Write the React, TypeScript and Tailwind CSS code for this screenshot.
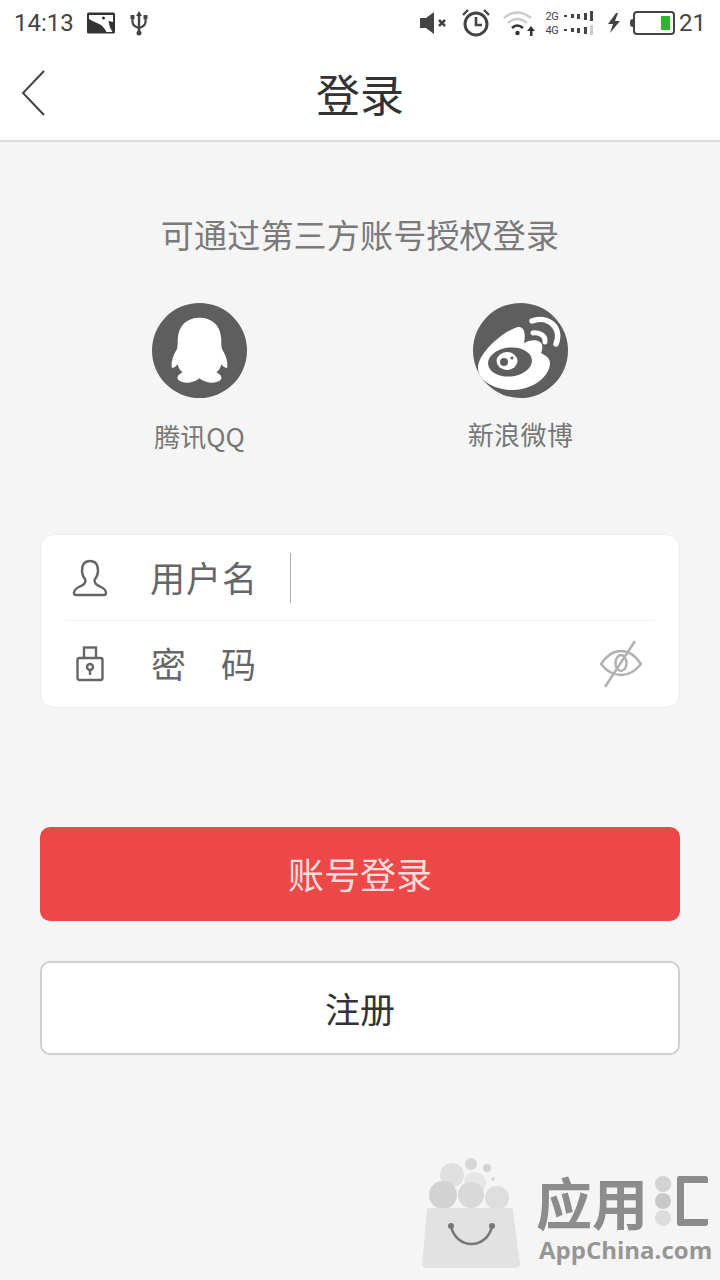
import React from "react";

const cjk = { fontFamily: '"Noto Sans CJK SC", sans-serif' };

function StatusLeft() {
  return (
    <div className="flex items-center">
      <span className="w-[59px] text-[24px] leading-none text-[#444] [font-family:Roboto,sans-serif]">14:13</span>
      <svg className="ml-[14px]" width="28" height="22" viewBox="0 0 28 22">
        <rect x="0" y="0.5" width="28" height="21" rx="1.5" fill="#333" />
        <path d="M2 3 H26 V10 L21.5 9 Q22 15 25.5 20 H19.5 Q16 13 10 11 Q5 9 2 7 Z" fill="#fff" />
        <circle cx="16.5" cy="6" r="1.5" fill="#333" />
      </svg>
      <svg className="ml-[14px]" width="20" height="26" viewBox="0 0 20 26">
        <path d="M10 1 L13 6 H11.2 V22 H8.8 V6 H7 Z" fill="#444" />
        <path d="M3.5 8 V12 Q3.5 16 10 18 Q16.5 16 16.5 12 V8" fill="none" stroke="#444" strokeWidth="2.2" />
        <rect x="1.5" y="5" width="4" height="4" fill="#444" />
        <rect x="14.5" y="5" width="4" height="4" fill="#444" />
        <circle cx="10" cy="23" r="2.5" fill="#444" />
      </svg>
    </div>
  );
}

function Signal({ label, last }: { label: string; last: string }) {
  return (
    <div className="flex h-[14px] items-center gap-[3.5px]">
      <span className="w-[13px] text-[11px] leading-none tracking-[-0.5px]">{label}</span>
      <span className="ml-[2px] h-[2px] w-[3px] bg-[#444]" />
      <span className="h-[4px] w-[3px] bg-[#444]" />
      <span className="h-[5px] w-[3px] bg-[#444]" />
      <span className="h-[7px] w-[3px] bg-[#444]" />
      <span className="h-[10px] w-[3px]" style={{ background: last }} />
    </div>
  );
}

function StatusRight() {
  return (
    <div className="flex items-center">
      <svg width="30" height="24" viewBox="0 0 30 24">
        <path d="M1 7 H7 L15 1 V23 L7 17 H1 Z" fill="#444" />
        <path d="M20 9 L26 15 M26 9 L20 15" stroke="#444" strokeWidth="2.5" />
      </svg>
      <svg className="ml-[11px]" width="32" height="30" viewBox="0 0 32 30">
        <circle cx="16" cy="16" r="11" fill="none" stroke="#444" strokeWidth="3" />
        <path d="M16 9 V17 H22" fill="none" stroke="#444" strokeWidth="2.6" />
        <path d="M3 7 L8 2 M29 7 L24 2" stroke="#444" strokeWidth="2.4" />
      </svg>
      <svg className="ml-[11px]" width="34" height="28" viewBox="0 0 34 28">
        <path d="M1 9 Q14 -2 28 9" fill="none" stroke="#ccc" strokeWidth="2.5" />
        <path d="M5 14 Q14 6 24 14" fill="none" stroke="#ccc" strokeWidth="2.5" />
        <path d="M9 19 Q14 14 20 19" fill="none" stroke="#333" strokeWidth="2.5" />
        <circle cx="14.5" cy="24" r="2.2" fill="#333" />
        <path d="M28 17 L32 22 H29.5 V27 H27 V22 H24 Z" fill="#333" />
      </svg>
      <div className="ml-[9px] flex flex-col text-[#444] [font-family:Roboto,sans-serif]">
        <Signal label="2G" last="#444" />
        <Signal label="4G" last="#ccc" />
      </div>
      <svg className="ml-[13px]" width="16" height="22" viewBox="0 0 16 22">
        <path d="M10 1 L2 12 H7 L4 21 L14 9 H9 L12 1 Z" fill="#444" />
      </svg>
      <div className="ml-[8px] flex items-center">
        <div className="h-[8px] w-[3px] rounded-l-sm bg-[#444]" />
        <div className="flex h-[24px] w-[42px] items-center justify-end rounded-[4px] border-2 border-[#444] pr-[3px]">
          <div className="h-[14px] w-[9px] bg-[#2fb52f]" />
        </div>
      </div>
      <span className="ml-[4px] text-[24px] leading-none text-[#444] [font-family:Roboto,sans-serif]">21</span>
    </div>
  );
}

function QQIcon() {
  return (
    <svg width="95" height="95" viewBox="0 0 96 96">
      <circle cx="48" cy="48" r="48" fill="#5e5e5e" />
      <path
        d="M48 15 C35 15 27 23 26 36 C26 41 26 44 25 47 C22 52 19 59 20 65 C21 67 24 64 26 62 C27 66 28 68 31 70 C27 72 24 75 27 78 C32 82 42 81 48 76 C54 81 64 82 69 78 C72 75 69 72 65 70 C68 68 69 66 70 62 C72 64 75 67 76 65 C77 59 74 52 71 47 C70 44 70 41 70 36 C69 23 61 15 48 15 Z"
        fill="#fff"
      />
    </svg>
  );
}

function WeiboIcon() {
  return (
    <svg width="95" height="95" viewBox="0 0 95 95">
      <circle cx="47.5" cy="47.5" r="47.5" fill="#5e5e5e" />
      <path
        d="M45 24 C30 28 5 50 5 65 C5 78 22 87 40 87 C60 87 77 73 77 60 C77 54 71 52 68 50 C70 45 70 41 67 39 C63 36 56 37 51 40 C53 30 51 23 45 24 Z"
        fill="#fff"
      />
      <ellipse cx="37" cy="59" rx="22" ry="14.5" fill="#5e5e5e" transform="rotate(-6 37 59)" />
      <ellipse cx="34" cy="58" rx="10.5" ry="9" fill="#fff" />
      <circle cx="31" cy="59" r="4" fill="#5e5e5e" />
      <circle cx="39" cy="55" r="1.6" fill="#5e5e5e" />
      <path d="M60 30 C67 29 73 33 72 39" fill="none" stroke="#fff" strokeWidth="5" strokeLinecap="round" />
      <path d="M59 18 C74 12 90 24 83 41" fill="none" stroke="#fff" strokeWidth="5.5" strokeLinecap="round" />
    </svg>
  );
}

function UserIcon() {
  return (
    <svg width="36" height="38" viewBox="0 0 36 38" fill="none" stroke="#666" strokeWidth="2.4" strokeLinejoin="round">
      <path d="M18 2 C11.5 2 10 7 10 12 C10 16 12 19 13.5 21 C13.5 25 11 26 7 28 C3 30 2 32 2 34 C2 35.5 3 36 4 36 H32 C33 36 34 35.5 34 34 C34 32 33 30 29 28 C25 26 22.5 25 22.5 21 C24 19 26 16 26 12 C26 7 24.5 2 18 2 Z" />
    </svg>
  );
}

function LockIcon() {
  return (
    <svg width="28" height="36" viewBox="0 0 28 36" fill="none" stroke="#666" strokeWidth="2.4">
      <rect x="8" y="1.5" width="12" height="12" />
      <rect x="1.5" y="12" width="25" height="22" rx="2" fill="#fff" />
      <circle cx="14" cy="21" r="3" />
      <path d="M14 24 V29" />
    </svg>
  );
}

function EyeOff() {
  return (
    <svg width="44" height="50" viewBox="0 0 44 50" fill="none" stroke="#b0b0b0" strokeWidth="2.4">
      <path d="M2 25 C9 14 16 12 22 12 C28 12 35 14 42 25 C35 34 28 36 22 36 C16 36 9 34 2 25 Z" />
      <ellipse cx="22" cy="24" rx="5.5" ry="8" />
      <path d="M36 2 L6 48" />
    </svg>
  );
}

function Watermark() {
  return (
    <div className="absolute bottom-0 right-0 flex h-[120px] w-[300px]">
      <svg className="overflow-visible" width="110" height="114" viewBox="0 0 110 114">
        <circle cx="51" cy="4" r="6" fill="#d6d6d6" />
        <circle cx="67" cy="8" r="4" fill="#d2d2d2" />
        <circle cx="73" cy="19" r="2" fill="#d8d8d8" />
        <circle cx="32" cy="15" r="12" fill="#e0e0e0" />
        <circle cx="55" cy="23" r="11" fill="#e6e6e6" />
        <circle cx="23" cy="35" r="14" fill="#d2d2d2" />
        <circle cx="51" cy="35" r="13" fill="#d9d9d9" />
        <circle cx="77" cy="38" r="12" fill="#dedede" />
        <path d="M9 48 H91 Q93 48 93 50 L100 104 Q100 108 94 108 H8 Q2 108 2 104 L7 50 Q7 48 9 48 Z" fill="#e2e2e2" />
        <path d="M31 66 C36 90 67 90 72 66" fill="none" stroke="#777" strokeWidth="2.6" />
        <circle cx="31" cy="66" r="3" fill="#777" />
        <circle cx="72" cy="66" r="3" fill="#777" />
      </svg>
      <div className="ml-[6px] flex flex-col">
        <div className="mt-[12px] flex h-[58px] items-center">
          <span className="text-[56px] leading-[50px] font-bold text-[#8c8c8c]" style={cjk}>应用</span>
          <div className="ml-[7px] flex flex-col gap-[1px]">
            <span className="size-[16px] rounded-full bg-[#d2d2d2]" />
            <span className="size-[16px] rounded-full bg-[#c8c8c8]" />
            <span className="size-[16px] rounded-full bg-[#dcdcdc]" />
          </div>
          <div className="ml-[6px] h-[50px] w-[31px] rounded-[3px] border-y-[7px] border-l-[7px] border-[#8c8c8c]" />
        </div>
        <span className="ml-[3px] mt-[10px] text-[24px] leading-[20px] font-bold text-[#969696] [font-family:'Open_Sans',sans-serif]">AppChina.com</span>
      </div>
    </div>
  );
}

export default function App() {
  return (
    <div className="relative flex h-[1280px] w-[720px] flex-col overflow-hidden bg-[#f5f5f5]" style={cjk}>
      <header className="h-[142px] border-b-2 border-[#dcdcdc] bg-white">
        <div className="flex h-[46px] items-center justify-between px-[14px]">
          <StatusLeft />
          <StatusRight />
        </div>
        <div className="relative flex h-[94px] items-center justify-center">
          <svg className="absolute left-[21px] top-[24px]" width="25" height="46" viewBox="0 0 25 46" fill="none" stroke="#444" strokeWidth="2">
            <path d="M23 1 L2 23 L23 45" />
          </svg>
          <h1 className="text-[44px] leading-none font-normal text-[#333]">登录</h1>
        </div>
      </header>

      <p className="mt-[69px] text-center text-[33px] leading-[46px] tracking-[0.2px] text-[#7a7a7a]">可通过第三方账号授权登录</p>

      <div className="mt-[46px] flex">
        <div className="ml-[100px] flex w-[199px] flex-col items-center">
          <QQIcon />
          <span className="mt-[19px] text-[26px] leading-[38px] text-[#777]">腾讯QQ</span>
        </div>
        <div className="ml-[122px] flex w-[199px] flex-col items-center">
          <WeiboIcon />
          <span className="mt-[17px] text-[26px] leading-[38px] tracking-[0.4px] text-[#777]">新浪微博</span>
        </div>
      </div>

      <div className="mx-[40px] mt-[79px] h-[174px] rounded-[14px] border border-[#ececec] bg-white">
        <div className="mx-[24px] flex h-[86px] items-center border-b border-[#f5f5f5]">
          <div className="ml-[7px] flex w-[36px] justify-center"><UserIcon /></div>
          <span className="ml-[42px] w-[108px] pb-[2px] text-[35px] leading-none tracking-[1px] text-[#666]">用户名</span>
          <div className="ml-[32px] h-[50px] w-px bg-[#aaa]" />
        </div>
        <div className="mx-[24px] flex h-[86px] items-center">
          <div className="ml-[7px] flex w-[36px] justify-center"><LockIcon /></div>
          <span className="ml-[43px] flex w-[105px] justify-between pb-[4px] text-[35px] leading-none text-[#666]">
            <span>密</span>
            <span>码</span>
          </span>
          <div className="ml-auto mr-[12px]"><EyeOff /></div>
        </div>
      </div>

      <button className="mx-[40px] mt-[119px] flex h-[94px] items-center justify-center rounded-[10px] bg-[#ec4848] pb-[2px] text-[36px] text-[#fbdcdc]">账号登录</button>
      <button className="mx-[40px] mt-[40px] flex h-[94px] items-center justify-center rounded-[10px] border-2 border-[#cfcfcf] bg-white text-[35px] text-[#333]">注册</button>

      <Watermark />
    </div>
  );
}
